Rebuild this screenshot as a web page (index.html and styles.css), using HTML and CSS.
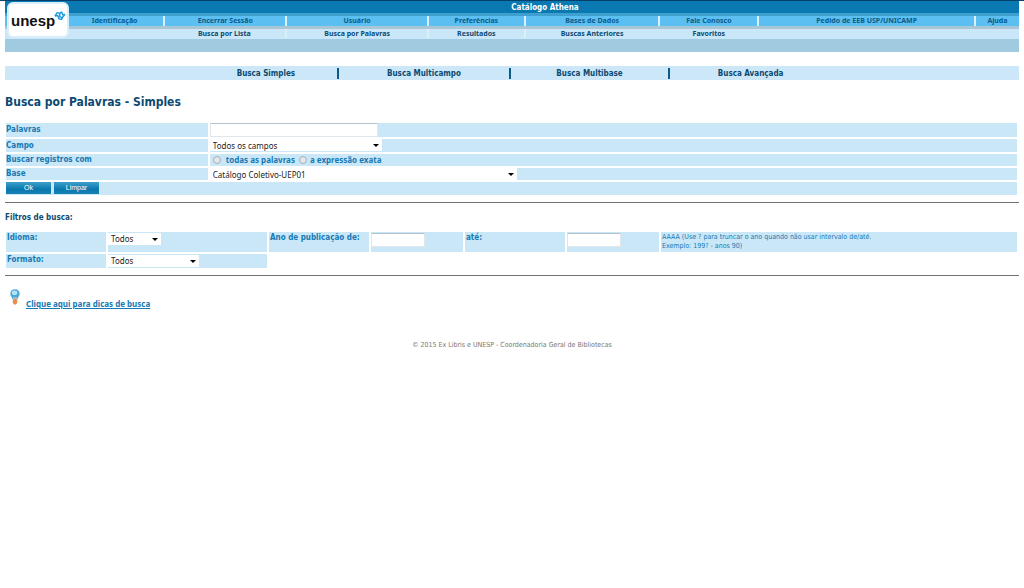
FILE: index.html
```html
<!DOCTYPE html>
<html lang="pt-BR">
<head>
<meta charset="utf-8">
<title>Catálogo Athena</title>
<link rel="stylesheet" href="styles.css">
</head>
<body>
<header class="header">
  <a class="logo" href="#" aria-label="unesp">
    <span>unesp</span>
    <svg class="logo-mark" viewBox="0 0 20 18" aria-hidden="true">
      <g fill="none" stroke="#1e9de0" stroke-width="2.6" stroke-linejoin="round">
        <path d="M1 9 L5 3 L10 4 L9 10 L14 12 L19 6"/>
        <path d="M1 9 L6 8 L8 14 L13 15 L14 12"/>
        <path d="M10 4 L13 2 L15 7 L19 6"/>
      </g>
    </svg>
  </a>
  <div class="title">Catálogo Athena</div>
  <nav class="nav nav-main">
    <a href="#">Identificação</a><a href="#">Encerrar Sessão</a><a href="#">Usuário</a><a href="#">Preferências</a><a href="#">Bases de Dados</a><a href="#">Fale Conosco</a><a href="#">Pedido de EEB USP/UNICAMP</a><a href="#">Ajuda</a>
  </nav>
  <nav class="nav nav-sub">
    <a class="first" href="#">Busca por Lista</a><a href="#">Busca por Palavras</a><a href="#">Resultados</a><a href="#">Buscas Anteriores</a><a class="plain" href="#">Favoritos</a>
  </nav>
  <div class="band"></div>
</header>
<nav class="tabs">
  <a href="#">Busca Simples</a><a href="#">Busca Multicampo</a><a href="#">Busca Multibase</a><a href="#">Busca Avançada</a>
</nav>
<main>
  <h1>Busca por Palavras - Simples</h1>
  <form>
    <table class="grid search">
      <tr class="tall"><th><label for="words">Palavras</label></th><td><input class="text words" id="words" type="text"></td></tr>
      <tr><th><label for="field">Campo</label></th><td><span class="pick pick-field"><select id="field"><option>Todos os campos</option></select></span></td></tr>
      <tr class="short"><th>Buscar registros com</th><td><div class="radios"><input type="radio" name="m" id="all"><label class="all" for="all">todas as palavras</label><input type="radio" name="m" id="exact"><label for="exact">a expressão exata</label></div></td></tr>
      <tr class="short"><th><label for="base">Base</label></th><td><span class="pick pick-base"><select id="base"><option>Catálogo Coletivo-UEP01</option></select></span></td></tr>
      <tr><td colspan="2"><div class="buttons"><button type="button">Ok</button><button type="reset">Limpar</button></div></td></tr>
    </table>
    <hr>
    <h2>Filtros de busca:</h2>
    <table class="grid filters">
      <colgroup><col class="c1"><col class="c2"><col class="c1"><col class="c3"><col class="c1"><col class="c3"><col></colgroup>
      <tr class="f1">
        <th><label for="lang">Idioma:</label></th>
        <td><span class="pick pick-lang"><select id="lang"><option>Todos</option></select></span></td>
        <th><label for="from">Ano de publicação de:</label></th>
        <td><input class="text year" id="from" type="text"></td>
        <th><label for="to">até:</label></th>
        <td><input class="text year" id="to" type="text"></td>
        <td class="hint">AAAA (Use ? para truncar o ano quando não usar intervalo de/até.<br>Exemplo: 199? - anos 90)</td>
      </tr>
      <tr class="f2">
        <th><label for="format">Formato:</label></th>
        <td><span class="pick pick-format"><select id="format"><option>Todos</option></select></span></td>
      </tr>
    </table>
    <hr>
  </form>
  <p class="tips">
    <svg class="bulb" viewBox="0 0 10 16" aria-hidden="true">
      <path d="M5 .3C2 .3.3 2.300.3 4.800c0 2 1.800 3.200 2.200 5.400h5C7.900 8 9.700 6.800 9.700 4.800 9.700 2.300 8 .3 5 .3z" fill="#4ba9d8"/>
      <ellipse cx="4.600" cy="3.800" rx="2.800" ry="2.300" fill="#b5e3f6"/>
      <path d="M3 8h4v3H3z" fill="#a9b8c0"/>
      <path d="M2.800 10.500h4.400v3.500L6 15.500H4L2.800 14z" fill="#e98a4e"/>
    </svg>
    <a href="#">Clique aqui para dicas de busca</a>
  </p>
</main>
<footer>© 2015 Ex Libris e UNESP - Coordenadoria Geral de Bibliotecas</footer>
</body>
</html>
```
FILE: styles.css
```css
* { box-sizing: border-box; }
body {
  margin: 0;
  padding: 0 5px;
  border-top: 1px solid #073f6b;
  background: #fff;
  color: #0c4a72;
  font: 8px/10px "DejaVu Sans Condensed", "DejaVu Sans", sans-serif;
}
a { color: inherit; text-decoration: none; }

.header { position: relative; font-weight: bold; }
.title {
  padding-left: 66px;
  height: 12px;
  background: #0b79b1;
  color: #fff;
  line-height: 13px;
  text-align: center;
}
.nav {
  display: grid;
  grid-template-columns: 97fr 122fr 141fr 97fr 134fr 99fr 216fr 45fr;
  padding-left: 61px;
  font-size: 7px;
  line-height: 10px;
  text-align: center;
  white-space: nowrap;
  font-family: "Noto Sans", sans-serif;
}
.nav a + a { border-left: 2px solid #d9f0fb; }
.nav-main {
  padding-top: 3px;
  padding-bottom: 3px;
  background: linear-gradient(#3f9fcf 0 3px, #5bbff1 3px 13px, #a8c6d6 13px);
  color: #0a5c8c;
}
.nav-sub { background: #c9e7f8; line-height: 9px; padding-bottom: 1px; }
.nav-sub .first { grid-column-start: 2; }
.nav-sub .plain { border-left-color: transparent; }
.band { height: 13px; background: #9fcae0; }
.logo {
  position: absolute;
  left: 2px;
  top: 1px;
  width: 62px;
  height: 36px;
  border: 2px solid #d8eefa;
  border-radius: 6px;
  background: #fff;
  color: #111;
  font: bold 15px/34px "Liberation Sans", sans-serif;
}
.logo span { padding-left: 2px; }
.logo-mark { position: absolute; right: 1px; top: 7px; width: 12px; height: 10px; }

.tabs {
  display: grid;
  grid-template-columns: 141fr 172fr 158fr 163fr;
  margin-top: 14px;
  padding: 2px 18.5% 1px 18.75%;
  background: #cce8f8;
  font-weight: bold;
  line-height: 11px;
  text-align: center;
}
.tabs a + a { border-left: 2px solid #0c5a88; }

h1 { margin: 14px 0 13px; font-size: 12px; line-height: 16px; }
h2 { margin: 10px 0 9px; font-size: 8px; line-height: 10px; }
hr { margin: 5px 0 0; border: 0; border-top: 1px solid #6d7378; }

.grid { width: calc(100% + 1px); border-spacing: 2px; border-collapse: separate; margin: 0 -1px; }
.grid th, .grid td { padding: 0; background: #cae7f8; color: #1779b3; text-align: left; font-weight: bold; vertical-align: top; }
.search { margin-top: -2px; }
.search tr { height: 13px; }
.search .tall { height: 14px; }
.search .short { height: 12px; }
.grid.search th { width: 20%; vertical-align: middle; }
.filters { table-layout: fixed; margin-top: -2px; }
.filters th { line-height: 12px; padding-left: 1px; }
.c1 { width: 100px; }
.c2 { width: 159px; }
.c3 { width: 92px; }
.f1 { height: 20px; }
.f2 { height: 14px; }
.grid .hint { font-size: 7px; line-height: 9px; font-weight: normal; padding: 1px; }

.text { display: block; height: 14px; padding: 0 2px; border: 1px solid #dfe7ec; border-top-color: #b6c3cb; background: #fff; font: inherit; }
.words { width: 168px; }
.year { width: 54px; margin-top: 1px; }
.pick { display: block; position: relative; }
.pick::after { content: ""; position: absolute; right: 3px; top: 5px; border: 3px solid transparent; border-top-color: #000; border-bottom: 0; }
.pick select {
  display: block;
  appearance: none;
  width: 100%;
  height: 12px;
  padding: 0 3px;
  border: 0;
  border-radius: 0;
  background: #fff;
  color: #222;
  font: 8px/12px "Noto Sans", sans-serif;
}
.pick-field { width: 172px; }
.search .pick select { padding-top: 1px; }
.pick-base { width: 307px; }
.pick-lang { width: 53px; margin-top: 1px; }
.pick-format { width: 91px; margin-top: 1px; }
.radios { display: flex; align-items: center; height: 12px; font-family: "Noto Sans", sans-serif; }
.radios input { appearance: none; width: 8px; height: 8px; margin: 0 3px; border: 1px solid #9fb0ba; border-radius: 50%; background: #e4e8ea; }
.radios .all { margin: 0 1px 0 2px; }
.buttons { display: flex; gap: 3px; }
button { width: 45px; height: 12px; padding: 0; border: 0; background: linear-gradient(#3fa0cb, #0a78ae 60%, #1683b7); color: #fff; font: 7px/12px "Liberation Sans", sans-serif; }

.tips { display: flex; align-items: flex-end; gap: 6px; margin: 13px 0 0; padding-left: 5px; font-family: "Noto Sans", sans-serif; font-weight: bold; color: #1779b3; }
.tips a { text-decoration: underline; margin-bottom: -4px; }
.bulb { width: 10px; height: 16px; }
footer { margin-top: 35px; color: #777; font-size: 7px; text-align: center; }
```
